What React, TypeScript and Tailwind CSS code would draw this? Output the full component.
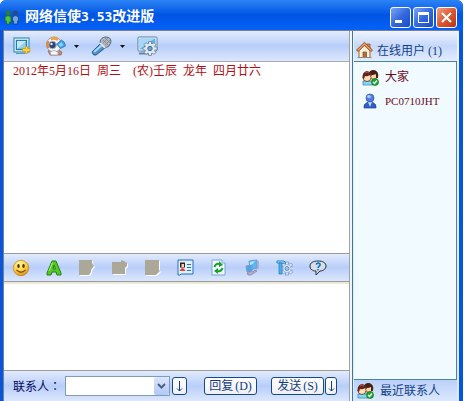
import React from "react";

const toolbarBg =
  "bg-linear-to-b from-[#e2ebfd] via-[#b8cef9] to-[#dde7fc]";

const MessengerIcon = () => (
  <svg width="16" height="16" viewBox="0 0 16 16">
    <circle cx="4" cy="4" r="2.500" fill="#2f7d2c" />
    <path d="M1 8q3-3 6 0v5H5.500v2H2.500v-3H1z" fill="#4fc33b" stroke="#185c1c" strokeWidth=".6" />
    <circle cx="11.500" cy="4" r="2.500" fill="#2d4b7c" />
    <path d="M8.500 8q3-3 6 0v4h-1v3h-4v-3h-1z" fill="#6fa6dc" stroke="#152e5c" strokeWidth=".6" />
  </svg>
);

const ScreenshotIcon = () => (
  <svg width="20" height="18" viewBox="0 0 20 18">
    <rect x="1" y="1" width="15" height="14" fill="#e4f5fb" stroke="#3b92ba" strokeWidth="1.200" />
    <rect x="3.500" y="3.500" width="10" height="9" fill="#8fd0ea" stroke="#2b7da8" strokeWidth="1.400" />
    <path d="M4 12 13 4H4z" fill="#c3e9f6" />
    <path d="M3 16.500h9" stroke="#4ba0c4" />
    <path d="M12.500 9.500v2h-3v3h3v2h2v-2H17v-3h-2.500v-2z" fill="#ffd23c" stroke="#c79a24" strokeWidth=".7" />
  </svg>
);

const WebcamIcon = () => (
  <svg width="21" height="20" viewBox="0 0 21 20">
    <path d="M3 15q6-4 14 1l-1 3H5z" fill="#c98a68" stroke="#8b5f56" strokeWidth=".7" />
    <circle cx="9" cy="8.500" r="7.500" fill="#f6f5f8" stroke="#9a96a6" />
    <path d="M6 1.500q5-2 8 1l-2 2.500q-3-2-6-.5z" fill="#f0a040" />
    <path d="M1 7q1-2 3-2v7H2z" fill="#e9852c" />
    <circle cx="7.500" cy="9" r="3.800" fill="#35436b" stroke="#a9bad3" />
    <circle cx="6.500" cy="8" r="1.200" fill="#d8edff" />
    <path d="m11.500 8 5-4q4 2 4 6l-5 2.500z" fill="#3d9de4" stroke="#2b76b8" strokeWidth=".7" />
    <path d="m13.500 8.500 3-2.500 2 3-3 2z" fill="#8ad1ff" />
    <path d="M5 16q4-3 8 0v3H6z" fill="#fafafd" stroke="#9297ae" strokeWidth=".7" />
  </svg>
);

const MicrophoneIcon = () => (
  <svg width="21" height="20" viewBox="0 0 21 20">
    <path d="m1 16 8-8 5 4-9 7q-3 1-4-3z" fill="#4e91cd" stroke="#235b94" />
    <path d="m3 16 8-7" stroke="#a9d7f4" strokeWidth="2" />
    <path d="M9 6q1-5 6-5 5 0 5 5-1 5-6 6-4-2-5-6z" fill="#b4b9c0" stroke="#56697f" />
    <path d="m12 4 5 5m-3-7 5 5m-7 0 5-5m-3 7 5-5" stroke="#7b8591" strokeWidth=".8" />
    <path d="m9 7 5 5" stroke="#e6f3fb" strokeWidth="1.500" />
  </svg>
);

const gearTeeth = [0, 45, 90, 135];

const SettingsIcon = () => (
  <svg width="21" height="20" viewBox="0 0 21 20">
    <rect x="1" y="1" width="19" height="14" rx="1" fill="#fff" stroke="#5f7f9f" />
    <rect x="2.500" y="2.500" width="16" height="11" fill="#5fb2ea" />
    <path d="M3 13V3h14z" fill="#a5d8f8" />
    <path d="M2 17.500h9" stroke="#6488aa" strokeWidth="2" />
    {gearTeeth.map((angle) => (
      <rect key={angle} x="11.500" y="5.500" width="3" height="14" rx=".5" fill="#e0eaf3" stroke="#546f8b" strokeWidth=".7" transform={`rotate(${angle} 13 12.500)`} />
    ))}
    <circle cx="13" cy="12.500" r="4.800" fill="#dfe8f0" />
    <circle cx="13" cy="12.500" r="2.200" fill="#61a9dc" stroke="#4b6b8c" />
  </svg>
);

const SmileyIcon = () => (
  <svg width="18" height="18" viewBox="0 0 18 18">
    <defs>
      <radialGradient id="face" cx=".4" cy=".25" r=".8">
        <stop stopColor="#fff8a6" />
        <stop offset=".6" stopColor="#ffce31" />
        <stop offset="1" stopColor="#db831b" />
      </radialGradient>
    </defs>
    <circle cx="9" cy="9" r="7.700" fill="url(#face)" stroke="#bd7e25" strokeWidth=".7" />
    <ellipse cx="6.500" cy="7" rx="1.300" ry="2" fill="#55310e" />
    <ellipse cx="11.500" cy="7" rx="1.300" ry="2" fill="#55310e" />
    <path d="M4.500 11q4.500 4.500 9 0" fill="none" stroke="#884b10" strokeWidth="1.200" />
  </svg>
);

const FontIcon = () => (
  <svg width="16" height="16" viewBox="0 0 16 16">
    <path d="m6 1h4l5 12v2h-4l-1-3H6l-1 3H1v-2zM7 9h2.500L8 5z" fill="#55c821" fillRule="evenodd" stroke="#238018" />
    <path d="M6.500 2.500 3 11" stroke="#b4f580" />
  </svg>
);

const disabledShapes = {
  file: "M1 1h13v3l2 3-3 4v2l-2 3H1z",
  folder: "M1 3h9V1l3 1 3 2v3l-2 2v6H1z",
  page: "M1 1h14v10l1 1-4 4H1z",
};

const DisabledIcon = ({ shape }: { shape: keyof typeof disabledShapes }) => (
  <svg width="18" height="18" viewBox="0 0 18 18">
    <path d={disabledShapes[shape]} fill="#fff" transform="translate(1 1)" />
    <path d={disabledShapes[shape]} fill="#aca899" />
  </svg>
);

const CardIcon = () => (
  <svg width="17" height="17" viewBox="0 0 17 17">
    <path d="M1 1h15v14H4l-1 1H1z" fill="#dcf0ff" stroke="#286eb8" />
    <rect x="3" y="3.500" width="5" height="5" fill="#3b1d1b" />
    <rect x="4.500" y="5" width="2.500" height="3" fill="#ffd0a8" />
    <path d="M2.500 12q3-6 6 0z" fill="#e94137" />
    <path d="M10 5.500h4M10 8.500h4M10 11.500h4" stroke="#2c6eb5" />
  </svg>
);

const RefreshIcon = () => (
  <svg width="15" height="17" viewBox="0 0 15 17">
    <path d="M1 1h10l3 3v12H1z" fill="#f0f8ff" stroke="#79a5cd" />
    <path d="M11 1v3h3" fill="#fff" stroke="#79a5cd" />
    <path d="M3.500 8q1-4 5-3M11.500 9q-1 4-5 3" fill="none" stroke="#18a02b" strokeWidth="2" />
    <path d="m8 2 4 4-4 2zM7 9l-4 3 4 3z" fill="#18a02b" />
  </svg>
);

const NetworkIcon = () => (
  <svg width="16" height="17" viewBox="0 0 16 17">
    <path d="m5 2 8-1v8l-7 2z" fill="#56b9f5" stroke="#6f9ed0" />
    <path d="m6 3 5-1-5 6z" fill="#b5e6ff" />
    <path d="m2 7 6-1v6l-5 1z" fill="#4aa5e8" stroke="#829ac7" />
    <path d="m3 14 4-2 2 1 2-2 2 1-3 2-3 2H4z" fill="#b0acc9" stroke="#817eaf" strokeWidth=".7" />
    <path d="M14 2v7l-2 1" fill="none" stroke="#a5a8cb" strokeWidth="1.500" />
  </svg>
);

const ToolsIcon = () => (
  <svg width="17" height="17" viewBox="0 0 17 17">
    {gearTeeth.map((angle) => (
      <rect key={angle} x="9.500" y="3" width="3" height="13" fill="#d7e7fb" stroke="#6e91c9" strokeWidth=".7" transform={`rotate(${angle} 11 9.500)`} />
    ))}
    <circle cx="11" cy="9.500" r="4" fill="#e3effd" stroke="#7c9acb" strokeWidth=".6" />
    <circle cx="11" cy="9.500" r="2" fill="#a6c5f5" stroke="#6689bd" />
    <path d="M1 2h7l2 2H1z" fill="#b7e4fb" stroke="#2c83c4" />
    <path d="M3 4h3v11H3z" fill="#4cb2ef" stroke="#2375b9" strokeWidth=".7" />
  </svg>
);

const HelpIcon = () => (
  <svg width="18" height="16" viewBox="0 0 18 16">
    <path d="M9 1c5 0 8 2 8 5s-3 5-6 5l-4 4v-4C3 11 1 9 1 6s3-5 8-5z" fill="#d8dfe6" stroke="#252e3c" />
    <path d="M7 4.500q2-2.500 4-.5c1 2-2 2-2 4M9 9v1.500" fill="none" stroke="#1678c4" strokeWidth="1.700" />
  </svg>
);

const HomeIcon = () => (
  <svg width="17" height="17" viewBox="0 0 17 17">
    <path d="M11 2h3v6h-3z" fill="#e6904c" stroke="#8a512f" strokeWidth=".8" />
    <path d="M3 8.500v7h11v-7L8.500 3z" fill="#fff1d6" stroke="#a76337" />
    <path d="m1 9 7.500-7L16 9" fill="none" stroke="#8d502b" strokeWidth="2.800" />
    <path d="m1.500 8.500 7-6.500 7 6.500" fill="none" stroke="#f1a15f" strokeWidth="1.400" />
    <path d="M7 10h3.500v5.500H7z" fill="#b56c3d" stroke="#78482b" strokeWidth=".7" />
    <path d="M1.500 15.500h14" stroke="#8d8b86" />
  </svg>
);

const GroupIcon = () => (
  <svg width="17" height="17" viewBox="0 0 17 17">
    <path d="M1 12h10v4H1z" fill="#85d8f5" stroke="#2c83a9" strokeWidth=".7" />
    <circle cx="11.500" cy="6" r="4.300" fill="#ffd3a0" stroke="#41201a" strokeWidth=".7" />
    <path d="M7 5q0-4 5-4 5 1 4 8h-2V5q-4 2-7 0z" fill="#48201a" />
    <circle cx="5" cy="8.500" r="4" fill="#ffdfb5" stroke="#4b2018" strokeWidth=".7" />
    <path d="M.5 9Q0 3 5 2q5 1 5 5L8 6Q5 8 3 7l-1 3z" fill="#63241c" />
    <path d="M3 4q2-2 4 0" fill="none" stroke="#ab5744" />
    <circle cx="13" cy="13" r="3.500" fill="#19a72a" stroke="#08751a" strokeWidth=".7" />
    <path d="m11 13 1.500 1.500 2.500-3" fill="none" stroke="#fff" strokeWidth="1.300" />
  </svg>
);

const UserIcon = () => (
  <svg width="14" height="16" viewBox="0 0 14 16">
    <path d="M1 15q-1-4 4-6h4q5 2 4 6z" fill="#315dc7" stroke="#234398" strokeWidth=".7" />
    <path d="m5 9 2 5 2-5z" fill="#b9dcff" />
    <circle cx="7" cy="5" r="4" fill="#517edf" stroke="#2c50a4" strokeWidth=".7" />
    <ellipse cx="6" cy="3.500" rx="2" ry="1.500" fill="#a9c8ff" />
  </svg>
);

const Caret = () => (
  <svg width="5" height="3" viewBox="0 0 5 3">
    <path d="M0 0h5L2.500 3z" fill="#111" />
  </svg>
);

const DownArrow = () => (
  <svg width="7" height="11" viewBox="0 0 7 11">
    <path d="M3.500 0v10M1 7.500 3.500 10 6 7.500" fill="none" stroke="#123c78" />
  </svg>
);

const windowButtons = [
  {
    label: "最小化",
    style: "bg-linear-to-br from-[#7da5f5] via-[#3368df] to-[#1a4bc4]",
    icon: <path d="M4 12h7v3H4z" fill="#fff" />,
  },
  {
    label: "最大化",
    style: "bg-linear-to-br from-[#7da5f5] via-[#3368df] to-[#1a4bc4]",
    icon: <path d="M4 4h11v11H4zM5 7v7h9V7z" fill="#fff" fillRule="evenodd" />,
  },
  {
    label: "关闭",
    style: "bg-linear-to-br from-[#f0a080] via-[#dd5630] to-[#b83415]",
    icon: <path d="m5 5 9 9m0-9-9 9" stroke="#fff" strokeWidth="2.200" />,
  },
];

const mainTools = [
  { label: "截图", icon: <ScreenshotIcon />, menu: false },
  { label: "视频", icon: <WebcamIcon />, menu: true },
  { label: "语音", icon: <MicrophoneIcon />, menu: true },
  { label: "设置", icon: <SettingsIcon />, menu: false },
];

const messageTools = [
  { label: "表情", icon: <SmileyIcon /> },
  { label: "字体", icon: <FontIcon /> },
  { label: "文件", icon: <DisabledIcon shape="file" />, disabled: true },
  { label: "文件夹", icon: <DisabledIcon shape="folder" />, disabled: true },
  { label: "页面", icon: <DisabledIcon shape="page" />, disabled: true },
  { label: "名片", icon: <CardIcon /> },
  { label: "刷新", icon: <RefreshIcon /> },
  { label: "网络", icon: <NetworkIcon /> },
  { label: "工具", icon: <ToolsIcon /> },
  { label: "帮助", icon: <HelpIcon /> },
];

const dateParts = ["2012年5月16日", "周三", "", "(农)壬辰", "龙年", "四月廿六"];

const buttonStyle =
  "flex h-[18px] items-center justify-center rounded-[3px] border border-[#174a7c] bg-linear-to-b from-white to-[#edf0f6] text-[#143a7c]";

const TitleBar = () => (
  <header className="flex h-[30px] items-center bg-linear-to-b from-[#2c83f5] via-[#0054e3] to-[#0562f8] pt-1 pr-[6px] pl-1">
    <MessengerIcon />
    <h1 className="ml-[5px] flex-1 text-sm leading-4 font-bold text-white">
      网络信使
      <span className="font-['DejaVu_Sans_Mono'] text-[13px]">3.53</span>
      改进版
    </h1>
    <div className="flex gap-[2px]">
      {windowButtons.map((button) => (
        <button
          key={button.label}
          aria-label={button.label}
          className={`flex size-[21px] items-center justify-center rounded-[3px] border border-white ${button.style}`}
        >
          <svg width="19" height="19" viewBox="0 0 19 19">
            {button.icon}
          </svg>
        </button>
      ))}
    </div>
  </header>
);

const MessageBar = () => (
  <form
    onSubmit={(e) => e.preventDefault()}
    className={`flex h-[31px] items-center border-t border-[#9c9c98] pl-[9px] text-[#08085c] ${toolbarBg}`}
  >
    <label htmlFor="contact">
      联系人
      <span className="font-['Noto_Sans_CJK_TC',sans-serif]" lang="zh-TW">
        ：
      </span>
    </label>
    <div className="relative ml-1 w-[105px]">
      <select
        id="contact"
        className="block h-5 w-full appearance-none border border-[#7f9db9] bg-white"
      />
      <span className="pointer-events-none absolute top-px right-px flex h-[18px] w-[15px] items-center justify-center rounded-xs bg-linear-to-b from-[#dce6fd] to-[#b2c7f5]">
        <svg width="9" height="6" viewBox="0 0 9 6">
          <path d="m1 1 3.500 3.500L8 1" fill="none" stroke="#4d6185" strokeWidth="2" />
        </svg>
      </span>
    </div>
    <button type="button" aria-label="选择联系人" className={`ml-[2px] w-[15px] ${buttonStyle}`}>
      <DownArrow />
    </button>
    <button type="button" className={`ml-[17px] w-[53px] gap-[2px] ${buttonStyle}`}>
      <span>回复</span>
      <span>(D)</span>
    </button>
    <button className={`ml-[14px] w-[53px] gap-[2px] ${buttonStyle}`}>
      <span>发送</span>
      <span>(S)</span>
    </button>
    <button type="button" aria-label="发送选项" className={`ml-px w-3 ${buttonStyle}`}>
      <DownArrow />
    </button>
  </form>
);

const UserPanel = () => (
  <aside className="flex w-[107px] flex-col border-l border-[#3f7894] bg-linear-to-b from-[#edf3fe] to-[#dce8fd] pr-[2px] pl-px text-[#123f86]">
    <h2 className="flex h-[30px] items-end gap-1 bg-linear-to-b from-[#eef4fe] via-[#c5d7fa] to-[#e2ecfd] pb-[2px] pl-[2px]">
      <HomeIcon />
      <span className="flex gap-[3px]">
        <span>在线用户</span>
        <span>(1)</span>
      </span>
    </h2>
    <ul className="flex-1 border border-l-0 border-[#4a869b] bg-[#f0faff] pt-[7px] pl-2 text-[#6b0b1b]">
      <li className="flex h-6 items-start gap-[6px] leading-4">
        <GroupIcon />
        大家
      </li>
      <li className="flex h-6 items-start gap-2 pl-px leading-4">
        <UserIcon />
        <span className="text-[11px]">PC0710JHT</span>
      </li>
    </ul>
    <h2 className="flex h-[21px] items-center gap-[6px] bg-linear-to-b from-[#bad0fa] to-[#dce8fd] pl-[3px]">
      <GroupIcon />
      最近联系人
    </h2>
  </aside>
);

const App = () => {
  return (
    <div className="bg-white pr-px">
      <div className="flex min-h-screen flex-col overflow-hidden rounded-t-md bg-[#0855dd] font-['Liberation_Serif','Noto_Sans_CJK_SC',serif] text-xs leading-4">
        <TitleBar />
        <div className="mr-1 ml-[3px] flex flex-1 border-t border-l border-[#777f91] bg-[#edf5fe]">
          <main className="mr-[2px] flex min-w-0 flex-1 flex-col border-r border-[#a4a29a] bg-white">
            <div className={`flex h-[31px] items-center gap-3 border-b border-[#a3aab8] pl-[9px] ${toolbarBg}`}>
              {mainTools.map((tool) => (
                <button
                  key={tool.label}
                  aria-label={tool.label}
                  className="flex items-center gap-2"
                >
                  {tool.icon}
                  {tool.menu && <Caret />}
                </button>
              ))}
            </div>
            <div className="flex-1 px-[9px] py-px text-[#b30f16]">
              <p className="flex flex-wrap gap-x-[6px]">
                {dateParts.map((part, i) => (
                  <span key={i}>{part}</span>
                ))}
              </p>
            </div>
            <div className={`flex h-[29px] items-center border-y border-[#999b9d] ${toolbarBg}`}>
              {messageTools.map((tool) => (
                <button
                  key={tool.label}
                  aria-label={tool.label}
                  disabled={tool.disabled}
                  className="flex w-[33px] items-center justify-center"
                >
                  {tool.icon}
                </button>
              ))}
            </div>
            <textarea
              aria-label="消息"
              className="block h-[88px] w-full resize-none border-t-2 border-[#ece9d8] bg-white px-2 outline-none"
            />
            <MessageBar />
          </main>
          <UserPanel />
        </div>
      </div>
    </div>
  );
};

export default App;
